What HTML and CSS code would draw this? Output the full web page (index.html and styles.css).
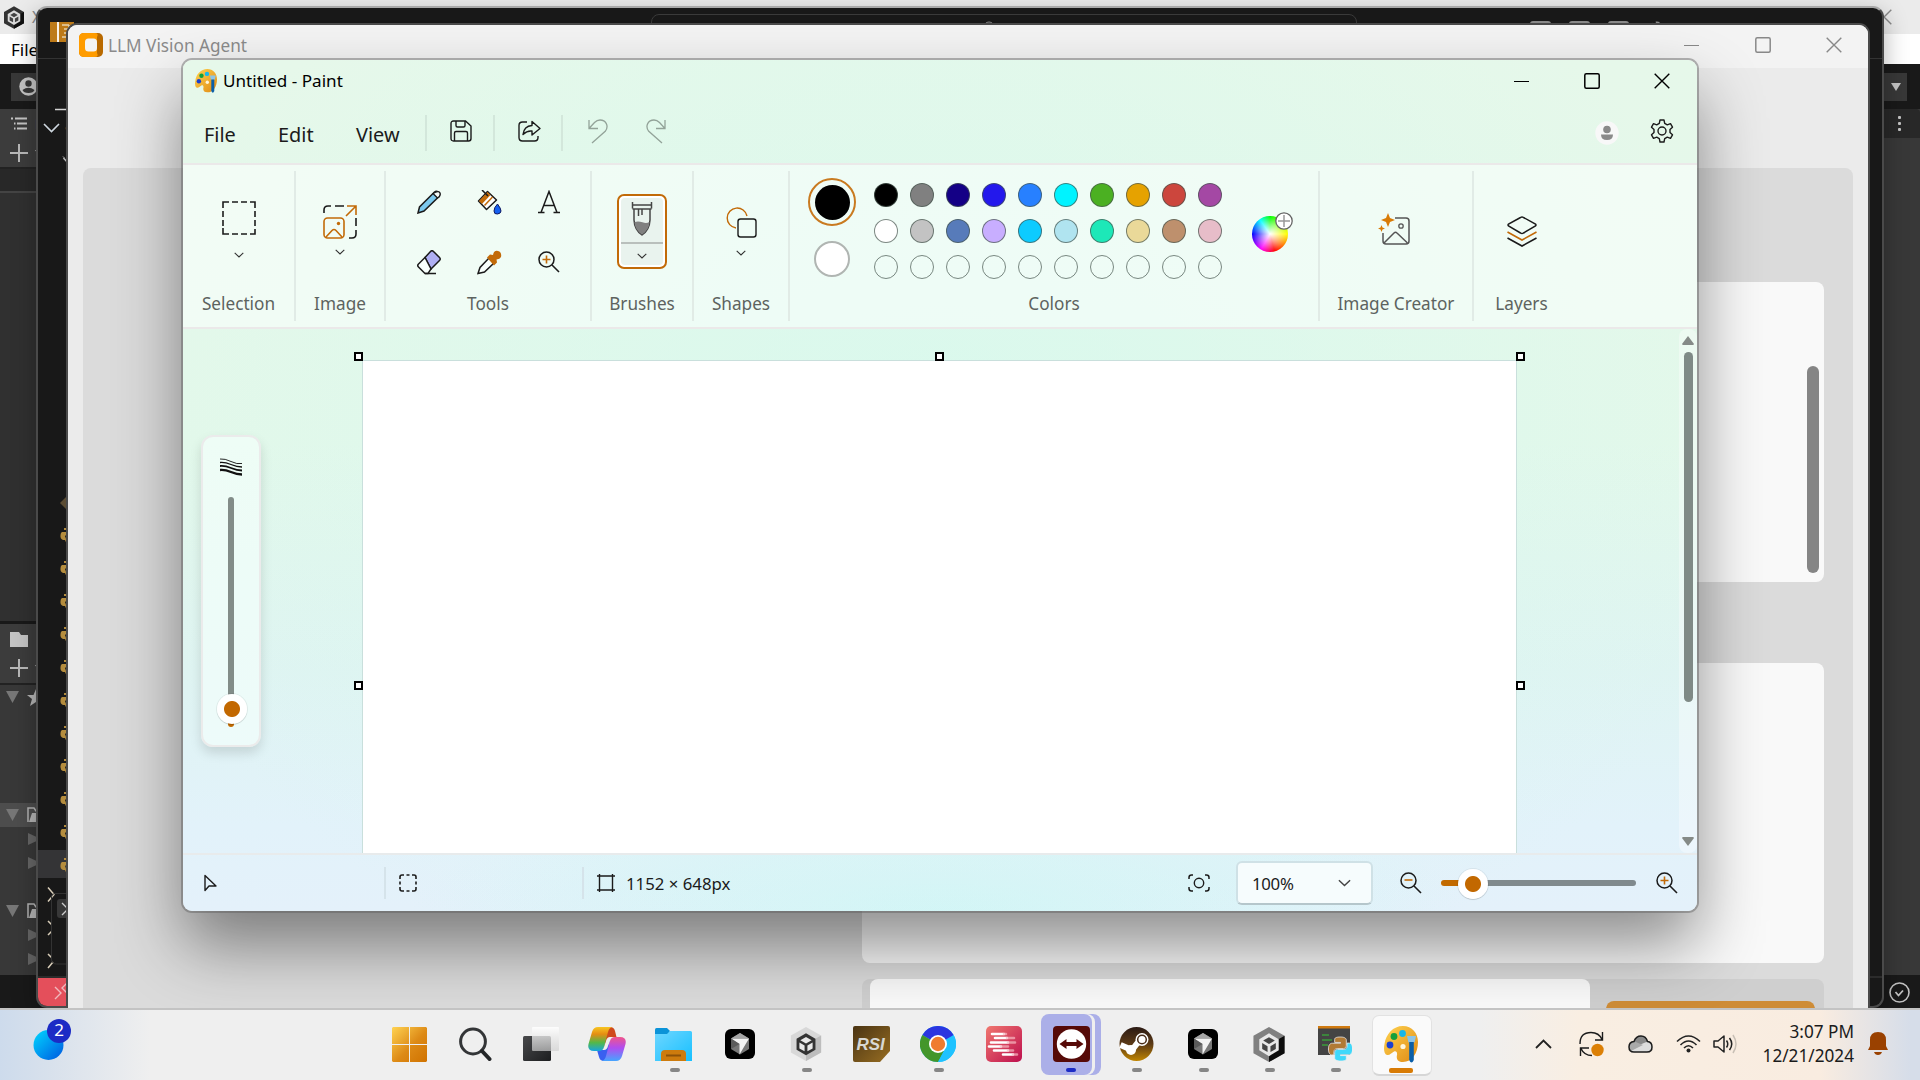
FILE: index.html
```html
<!DOCTYPE html>
<html lang="en">
<head>
<meta charset="utf-8">
<title>Desktop</title>
<link rel="stylesheet" href="styles.css">
</head>
<body>
<svg class="defs" width="0" height="0" aria-hidden="true">
  <defs>
    <linearGradient id="gGold" x1="0" y1="0" x2="1" y2="1"><stop offset="0" stop-color="#ffd34f"/><stop offset="1" stop-color="#e08a14"/></linearGradient>
    <linearGradient id="gStart" gradientUnits="userSpaceOnUse" x1="0" y1="0" x2="35" y2="35"><stop offset="0" stop-color="#ffd352"/><stop offset=".55" stop-color="#dd8a16"/><stop offset="1" stop-color="#d07200"/></linearGradient>
    <linearGradient id="gBlob" x1="0" y1="0" x2="1" y2="1"><stop offset="0" stop-color="#00d8ff"/><stop offset="1" stop-color="#0057e0"/></linearGradient>
    <linearGradient id="gFolder" x1="0" y1="0" x2="1" y2="1"><stop offset="0" stop-color="#6fd6ff"/><stop offset="1" stop-color="#17c0ff"/></linearGradient>
    <linearGradient id="gTask" x1="0" y1="0" x2="1" y2="1"><stop offset="0" stop-color="#f0776f"/><stop offset="1" stop-color="#bd0f4e"/></linearGradient>
    <linearGradient id="gSteam" x1="0" y1="0" x2="0" y2="1"><stop offset="0" stop-color="#2b1a14"/><stop offset=".5" stop-color="#5c3a16"/><stop offset="1" stop-color="#c08500"/></linearGradient>
    <linearGradient id="gRsi" x1="0" y1="0" x2="1" y2="1"><stop offset="0" stop-color="#4a3413"/><stop offset="1" stop-color="#976d22"/></linearGradient>
    <linearGradient id="gCopA" x1="0" y1="0" x2="0" y2="1"><stop offset="0" stop-color="#f7c522"/><stop offset=".3" stop-color="#e58d12"/><stop offset=".65" stop-color="#54b848"/><stop offset="1" stop-color="#16a5e0"/></linearGradient>
    <linearGradient id="gCopB" x1="0" y1="0" x2="0" y2="1"><stop offset="0" stop-color="#f0558a"/><stop offset=".45" stop-color="#b04df0"/><stop offset="1" stop-color="#45a5ff"/></linearGradient>
    <linearGradient id="gDark" x1="0" y1="0" x2="1" y2="1"><stop offset="0" stop-color="#48494b"/><stop offset="1" stop-color="#1c1d1f"/></linearGradient>
    <linearGradient id="gGlass" x1="0" y1="0" x2="0" y2="1"><stop offset="0" stop-color="#ffffff"/><stop offset="1" stop-color="#d0d0d0" stop-opacity=".8"/></linearGradient>
    <symbol id="palette" viewBox="0 0 34 37">
      <path d="M19 0C28 0 34 7 34 16c0 11-6 20-15 20-5 0-7-3-6-7 .5-3-1-4.500-3-3.500-3 1.500-4 4-7 3.500-3-1-3.500-6-2.500-11C2 8 9 0 19 0Z" fill="url(#gGold)"/>
      <circle cx="18.500" cy="7.500" r="3.400" fill="#18b7ea"/><circle cx="10" cy="10.500" r="3.400" fill="#13a03c"/><circle cx="6" cy="19" r="3.400" fill="#1a3fd0"/><circle cx="19" cy="20.500" r="2.600" fill="#fff6dc"/>
      <path d="M23 10h9l-1.500 6.500h-6Z" fill="#8cc4e8"/><path d="M25.200 16h4.600v18q-2.300 5-4.600 0Z" fill="#0b5fa8"/>
    </symbol>
    <symbol id="unity" viewBox="0 0 32 36">
      <path d="M16 0 32 9v18L16 36 0 27V9Z" fill="currentColor"/>
      <path d="M16 18 32 9v18L16 36Z" fill="var(--side)"/>
      <path d="M16 6.500 26 12.500V24l-10 6-10-6V12.500Z" fill="var(--cube)"/>
      <path d="M16 10.500 22 14l-6 3.500L10 14ZM9 16.500l5.500 3.200v6L9 22.700ZM23 16.500l-5.500 3.200v6l5.500-3Z" fill="var(--core)"/>
    </symbol>
    <symbol id="cursorApp" viewBox="0 0 30 30">
      <rect width="30" height="30" rx="6" fill="#000"/><path d="M15 4 24 9.500V20L15 25.500 6 20V9.500Z" fill="#777"/><path d="M6 9.500h18L14.500 25.500V15Z" fill="#f3f3f3"/><path d="M15 4 24 9.500H6Z" fill="#a6a6a6"/><path d="M6 9.500v10.500l8.500-5Z" fill="#5b5b5b"/>
    </symbol>
    <symbol id="chev" viewBox="0 0 10 6"><path d="M.7.800 5 5 9.300.800" fill="none" stroke="currentColor" stroke-width="1.100"/></symbol>
    <symbol id="close" viewBox="0 0 16 16"><path d="m.7.700 14.600 14.600M15.300.700.700 15.300" fill="none" stroke="currentColor" stroke-width="1.400"/></symbol>
    <symbol id="max" viewBox="0 0 16 16"><rect x=".8" y=".8" width="14.400" height="14.400" rx="1.500" fill="none" stroke="currentColor" stroke-width="1.500"/></symbol>
    <symbol id="min" viewBox="0 0 16 16"><path d="M0 8.500h15" stroke="currentColor" stroke-width="1.200"/></symbol>
    <symbol id="snake" viewBox="0 0 16 16"><path d="M4 0h8v2H4ZM2 4h9v3H6.500q-1.500 0-1.500 2v3H3q-3-1-2.500-5Q.7 4.500 2 4Z" fill="#b58d3e"/><path d="M7 8h9v7H8q-3-.5-3-4 0-2 2-3Z" fill="#b58d3e"/></symbol>
    <symbol id="fold" viewBox="0 0 18 16"><path d="M1 15V1h6l2 3h7v2" fill="none" stroke="#b4b4b4" stroke-width="1.500"/><path d="M5 6h13l-3 9H2Z" fill="#b4b4b4"/></symbol>
    <symbol id="lens" viewBox="0 0 22 22"><circle cx="8.500" cy="8.500" r="7.500" fill="none" stroke="#1b1b1b" stroke-width="1.500"/><path d="m14 14 7 7" stroke="#1b1b1b" stroke-width="1.600"/></symbol>
    <path id="pyHalf" d="M14.250.180l.9.200.73.260.59.300.45.320.34.340.25.340.16.330.1.300.04.260.02.200-.01.130V8.500l-.05.630-.13.550-.21.460-.26.380-.3.310-.33.250-.35.190-.35.140-.33.100-.3.070-.26.040-.21.020H8.770l-.69.050-.59.140-.5.220-.41.270-.33.320-.27.350-.2.360-.15.370-.1.350-.07.320-.04.270-.02.210v3.060H3.170l-.21-.03-.28-.07-.32-.12-.35-.18-.36-.26-.36-.36-.35-.46-.32-.59-.28-.73-.21-.88-.14-1.050-.05-1.230.06-1.220.16-1.040.24-.87.32-.71.36-.57.4-.44.42-.33.42-.24.4-.16.36-.1.32-.05.24-.01h.16l.06.010h8.160v-.83H6.180l-.01-2.750-.02-.37.05-.34.11-.31.17-.28.25-.26.31-.23.38-.2.44-.18.51-.15.58-.12.64-.1.71-.06.77-.04.84-.02 1.270.05z"/>
  </defs>
</svg>

<main class="desktop">
  <section class="win unity">
    <div class="u-title"><svg class="u-logo" width="20" height="23"><use href="#unity"/></svg><span>X</span><svg class="u-close" width="16" height="16"><use href="#close"/></svg></div>
    <div class="u-menu">File</div>
    <div class="u-tool">
      <div class="u-btn"><svg width="19" height="19" viewBox="0 0 19 19"><circle cx="9.500" cy="9.500" r="9.200" fill="#c4c4c4"/><circle cx="9.500" cy="6.500" r="3.200" fill="#383838"/><path d="M3.500 13q6-4.500 12 0-1 3-6 3t-6-3Z" fill="#383838"/></svg></div>
      <div class="u-drop"><svg width="10" height="8" viewBox="0 0 10 8"><path d="M0 0h10L5 8Z" fill="#c4c4c4"/></svg></div>
    </div>
    <div class="u-cols">
      <div class="u-left">
        <div class="u-tab"><svg width="16" height="13" viewBox="0 0 16 13"><path d="M0 1.500h2M4 1.500h12M6 6.500h10M3 6.500h1.500M6 11.500h10M3 11.500h1.500" stroke="#c4c4c4" stroke-width="1.800"/></svg><span>H</span></div>
        <div class="u-plus"><svg width="32" height="18" viewBox="0 0 32 18"><path d="M9 0v18M0 9h18" stroke="#b8b8b8" stroke-width="2"/><path d="M25 6h7l-3.500 5Z" fill="#b8b8b8"/></svg></div>
        <div class="u-scene"></div>
        <div class="u-tree"></div>
        <div class="u-tab u-proj"><svg width="18" height="15" viewBox="0 0 18 15"><path d="M0 0h9l2 3h7v12H0Z" fill="#c4c4c4"/></svg><span>P</span></div>
        <div class="u-plus u-plus2"><svg width="32" height="18" viewBox="0 0 32 18"><path d="M9 0v18M0 9h18" stroke="#b8b8b8" stroke-width="2"/><path d="M25 6h7l-3.500 5Z" fill="#b8b8b8"/></svg></div>
        <div class="u-files">
          <div class="u-row"><i class="tri"></i><svg width="18" height="17" viewBox="0 0 18 17"><path d="m9 0 2.500 6H18l-5 4 2 7-6-4-6 4 2-7-5-4h6.500Z" fill="#b4b4b4"/></svg></div>
          <div class="u-gap"></div>
          <div class="u-row on"><i class="tri"></i><svg width="18" height="16"><use href="#fold"/></svg></div>
          <div class="u-row"><i class="tri side"></i></div>
          <div class="u-row"><i class="tri side"></i></div>
          <div class="u-row"></div>
          <div class="u-row"><i class="tri"></i><svg width="18" height="16"><use href="#fold"/></svg></div>
          <div class="u-row"><i class="tri side"></i></div>
          <div class="u-row"><i class="tri side"></i></div>
        </div>
      </div>
      <div class="u-right"><div class="u-dots"><i></i><i></i><i></i></div></div>
    </div>
    <div class="u-status"><svg width="21" height="21" viewBox="0 0 21 21"><circle cx="10.500" cy="10.500" r="9.500" fill="none" stroke="#c4c4c4" stroke-width="1.600"/><path d="m6.500 10 3 3.500 4.500-5" fill="none" stroke="#c4c4c4" stroke-width="1.800"/></svg></div>
  </section>

  <section class="win code">
    <div class="c-title">
      <svg class="c-logo" width="24" height="20" viewBox="0 0 24 20"><rect width="24" height="20" fill="#bd7a18"/><path d="M8 0v20" stroke="#fff" stroke-width="1.800"/><path d="M12 3h7M14 7h5M14 11h5M12 15h7M19 3v14" stroke="#e8d3ae" stroke-width="1.600"/></svg>
      <div class="c-search"><svg width="12" height="12" viewBox="0 0 12 12"><circle cx="6" cy="6" r="5" fill="none" stroke="#8a8a8a"/></svg></div>
      <div class="c-layout"><i></i><i></i><i></i><svg width="20" height="20" viewBox="0 0 20 20"><circle cx="10" cy="10" r="8" fill="none" stroke="#8a8a8a" stroke-width="3" stroke-dasharray="3.500 2.800" stroke-dashoffset="1.500"/></svg></div>
    </div>
    <div class="c-head">
      <svg width="30" height="80" viewBox="0 0 30 80"><path d="M17 51.500h13" stroke="#d4d4d4" stroke-width="1.400"/><path d="m6 66 7.500 7.500L21 66" fill="none" stroke="#cfd8e0" stroke-width="1.600"/><path d="M30 66q-3 4 0 9" fill="none" stroke="#b87a2a" stroke-width="1.500"/></svg>
      <svg width="30" height="20" viewBox="0 0 30 20"><path d="m25 18.500 5 5" stroke="#bbb"/></svg>
      <svg width="30" height="10" viewBox="0 0 30 10"><path d="m25.500 0 5 5.500" stroke="#bbb" stroke-width="1.500"/></svg>
    </div>
    <svg class="c-diamond" width="8" height="16" viewBox="0 0 8 16"><path d="M8 0v16L0 8Z" fill="#5b4c33"/></svg>
    <div class="c-files">
      <div><svg width="16" height="16"><use href="#snake"/></svg></div><div><svg width="16" height="16"><use href="#snake"/></svg></div><div><svg width="16" height="16"><use href="#snake"/></svg></div><div><svg width="16" height="16"><use href="#snake"/></svg></div><div><svg width="16" height="16"><use href="#snake"/></svg></div><div><svg width="16" height="16"><use href="#snake"/></svg></div><div><svg width="16" height="16"><use href="#snake"/></svg></div><div><svg width="16" height="16"><use href="#snake"/></svg></div><div><svg width="16" height="16"><use href="#snake"/></svg></div><div><svg width="16" height="16"><use href="#snake"/></svg></div><div class="sel"><svg width="16" height="16"><use href="#snake"/></svg></div>
    </div>
    <svg class="c-term" width="30" height="99" viewBox="0 0 30 99"><path d="m10 9.500 6 7-6 7M10 43l3.500 3.500M10 57l3.500-3.500M10 76l3.500 3.500M10 90l5-6" fill="none" stroke="#d8cdb8" stroke-width="1.500"/><path d="M30 15.500H17q-3.500 0-3.500 3.500v62q0 5 5 5H30" fill="none" stroke="#333"/><rect x="19" y="21" width="14" height="19" rx="3" fill="#383838"/><path d="m24 25 6 6-6 6" fill="none" stroke="#ccc" stroke-width="1.400"/></svg>
    <div class="c-status"><div class="c-remote"><svg width="20" height="20" viewBox="0 0 20 20"><path d="m4 6 6 6-6 6M17 1l-6 6 6 6" fill="none" stroke="#f0b9bd" stroke-width="1.400"/></svg></div></div>
  </section>

  <section class="win agent">
    <header class="a-title">
      <svg width="24" height="24" viewBox="0 0 24 24"><rect width="24" height="24" rx="5" fill="#b96a00"/><path d="M5 0h11q4 0 2 4v16q2 4-2 4H5q-5 0-5-5V5Q0 0 5 0Z" fill="#ff9c00"/><rect x="6" y="5.500" width="12" height="13" rx="3.500" fill="#f4f4f4"/></svg>
      <span>LLM Vision Agent</span>
      <div class="ctl"><svg width="16" height="16"><use href="#min"/></svg><svg width="16" height="16"><use href="#max"/></svg><svg width="16" height="16"><use href="#close"/></svg></div>
    </header>
    <div class="a-body">
      <div class="a-side"></div>
      <div class="a-main">
        <div class="a-card c1"><div class="a-scroll"></div></div>
        <div class="a-card c2"></div>
        <div class="a-entry"><div class="a-input"></div><div class="a-send"></div></div>
      </div>
    </div>
  </section>

  <section class="win paint">
    <header class="p-title">
      <svg width="22" height="24"><use href="#palette"/></svg>
      <span>Untitled - Paint</span>
      <div class="ctl"><svg width="16" height="16"><use href="#min"/></svg><svg width="16" height="16"><use href="#max"/></svg><svg width="16" height="16"><use href="#close"/></svg></div>
    </header>
    <nav class="p-menu">
      <span class="m1">File</span><span class="m2">Edit</span><span class="m3">View</span>
      <div class="tool"><svg width="22" height="22" viewBox="0 0 22 22"><g fill="none" stroke="#1b1b1b" stroke-width="1.400"><path d="M3.500 1h12L21 6v12.500q0 2.500-2.500 2.500h-15Q1 21 1 18.500v-15Q1 1 3.500 1Z"/><path d="M6 1v4.500q0 1.500 1.500 1.500h6Q15 7 15 5.500V1M4.500 21v-8q0-1.500 1.500-1.500h10q1.500 0 1.500 1.500v8"/></g></svg></div>
      <div class="tool"><svg width="23" height="22" viewBox="0 0 23 22"><g fill="none" stroke="#1b1b1b" stroke-width="1.400" stroke-linejoin="round"><path d="M9 2H4.500Q1 2 1 5.500v12Q1 21 4.500 21h12q3.500 0 3.500-3.500V16"/><path d="M14 1.500 22 8.500l-8 6.500v-4q-5-.5-9 3.500 1-8.500 9-9Z"/></g></svg></div>
      <div class="tool undo"><svg width="20" height="25" viewBox="0 0 20 25"><path d="M1 1v8.500h9M1 9.500 6.500 3.500Q9 1 12 1c6 0 9 6 5.500 11L4 24" fill="none" stroke="#93a399" stroke-width="1.300"/></svg><svg width="20" height="25" viewBox="0 0 20 25"><path d="M19 1v8.500h-9M19 9.500 13.500 3.500Q11 1 8 1C2 1-1 7 2.500 12L16 24" fill="none" stroke="#93a399" stroke-width="1.300"/></svg></div>
      <svg class="avatar" width="24" height="24" viewBox="0 0 24 24"><circle cx="12" cy="12" r="11.700" fill="#f8f8f8"/><circle cx="12" cy="8.500" r="3.800" fill="#8a8a8a"/><path d="M6 13.500h12q0 5.500-6 5.500t-6-5.500Z" fill="#8a8a8a"/></svg>
      <svg class="gear" width="24" height="24" viewBox="0 0 24 24"><g fill="none" stroke="#1b1b1b" stroke-width="1.400" stroke-linejoin="round"><path d="M10 1h4l.7 3.300 2.600 1.500 3.200-1.100 2 3.500L20 10.500v3l2.500 2.300-2 3.500-3.200-1.100-2.600 1.500L14 23h-4l-.7-3.300-2.600-1.500-3.200 1.100-2-3.500L4 13.500v-3L1.500 8.200l2-3.500 3.200 1.100 2.600-1.500Z"/><circle cx="12" cy="12" r="4"/></g></svg>
    </nav>
    <div class="ribbon">
      <div class="grp g-sel"><div class="ico"><svg width="34" height="34" viewBox="0 0 34 34"><path d="M1 7V1h6M10 1h6M19 1h6M28 1h5v6M33 10v6M33 19v6M33 28v5h-5M25 33h-6M16 33h-6M7 33H1v-6M1 25v-6M1 16v-6" fill="none" stroke="#1b1b1b" stroke-width="1.600"/></svg><svg class="dd" width="10" height="6"><use href="#chev"/></svg></div><span>Selection</span></div>
      <div class="grp g-img"><div class="ico"><svg width="34" height="34" viewBox="0 0 34 34"><path d="M1 8V5Q1 1 5 1h3M12 1h9M33 13v8M33 25v4q0 4-4 4h-3" fill="none" stroke="#1b1b1b" stroke-width="1.600"/><g fill="none" stroke="#c26a08" stroke-width="1.600"><path d="M24 1h9v9M33 1 23 11"/><rect x="1" y="13" width="20" height="20" rx="3.500"/><path d="m3 32 6-6.500q2-2 4 0L19 32"/></g><circle cx="15.500" cy="18.500" r="1.700" fill="#c26a08"/></svg><svg class="dd" width="10" height="6"><use href="#chev"/></svg></div><span>Image</span></div>
      <div class="grp g-tools">
        <div class="toolgrid">
          <svg width="24" height="24" viewBox="0 0 24 24"><path d="m1 23 1.500-6L17.500 2q2-1.500 4 .5t.5 4L7 21Z" fill="#7cc9ee" stroke="#1b1b1b" stroke-width="1.500"/><path d="m16 3.500 4.500 4.500Q24 6 23 3T16 3.500Z" fill="#f5fbf8" stroke="#1b1b1b" stroke-width="1.400"/></svg>
          <svg width="25" height="25" viewBox="0 0 25 25"><path d="m1.500 11 9-9.500 9 8.500-10 9.500Z" fill="#fff" stroke="#1b1b1b" stroke-width="1.500" stroke-linejoin="round"/><path d="M2 11 10.500 2l3 3-8.500 9Z" fill="#c26a08"/><path d="m7.500 15.500 8-8.500" stroke="#c26a08" stroke-width="1.500"/><path d="M5 0l6 6" stroke="#1b1b1b" stroke-width="1.500"/><path d="M20.500 14q3.500 4.500 3.500 7t-3.500 3-3.500-3 3.500-7Z" fill="#1660f0" stroke="#101a60"/></svg>
          <svg width="22" height="24" viewBox="0 0 22 24"><path d="M0 22.500h6.500M15.500 22.500H22M3 22.500 11 1.500l8 21M6 15.500h10" fill="none" stroke="#1b1b1b" stroke-width="1.500"/></svg>
          <svg width="24" height="25" viewBox="0 0 24 25"><path d="m8 7.500 5.500-6q1.500-1.500 3 0l6 6q1.500 1.500 0 3L14 19Z" fill="#afaff3" stroke="#1b1b1b" stroke-width="1.500"/><path d="M8 7.500 1.500 14q-1.500 1.500 0 3L8 23.500h3L14 19Z" fill="#f8fffc" stroke="#1b1b1b" stroke-width="1.500"/><path d="M8 23.500h11" stroke="#1b1b1b" stroke-width="1.500"/></svg>
          <svg width="25" height="25" viewBox="0 0 25 25"><path d="m1 23.500 2-6L12 8l5 5-9.500 9Z" fill="#f8fffc" stroke="#1b1b1b" stroke-width="1.500"/><path d="M10 7.500 13 4.500l3 .5Q17 0 21 1t3 6q-1 2-4.500 2.500l.5 3-3 3Z" fill="#c26a08"/></svg>
          <svg width="22" height="22" viewBox="0 0 22 22"><use href="#lens"/><path d="M8.500 4.500v8M4.500 8.500h8" stroke="#c26a08" stroke-width="1.600"/></svg>
        </div><span>Tools</span></div>
      <div class="grp g-brush"><div class="brushbtn"><div class="inner"><svg width="22" height="34" viewBox="0 0 22 34"><path d="M1.500 0v6.500M20.500 0v6.500M1.500 3h19M1.500 7h19" stroke="#444" stroke-width="1.500"/><path d="M3 7v11q.5 10 8 15 7.500-5 8-15V7" fill="none" stroke="#444" stroke-width="1.500"/><path d="M3.500 20q4-1 8 .3t7-.3q-.5 8-7.500 12.500Q4 28 3.500 20Z" fill="#808080"/><path d="M7.500 7v7M11 7v6" stroke="#444" stroke-width="1.500"/></svg></div><div class="inner low"><svg width="10" height="6"><use href="#chev"/></svg></div></div><span>Brushes</span></div>
      <div class="grp g-shapes"><div class="ico"><svg width="31" height="31" viewBox="0 0 31 31"><path d="M10 21A10 10 0 1 1 21 9" fill="none" stroke="#c26a08" stroke-width="1.400"/><rect x="12" y="12" width="18" height="18" rx="2.500" fill="none" stroke="#1b1b1b" stroke-width="1.400"/></svg><svg class="dd" width="10" height="6"><use href="#chev"/></svg></div><span>Shapes</span></div>
      <div class="grp g-colors"><div class="palette">
        <div class="current"><div class="ring"><i></i></div><i class="second"></i></div>
        <div class="swatches">
          <i style="--c:#000"></i><i style="--c:#808080"></i><i style="--c:#140086"></i><i style="--c:#2318ec"></i><i style="--c:#2780ff"></i><i style="--c:#00f3ff"></i><i style="--c:#4bb022"></i><i style="--c:#e6a200"></i><i style="--c:#cc463d"></i><i style="--c:#a448a4"></i>
          <i style="--c:#fff"></i><i style="--c:#c3c3c3"></i><i style="--c:#577bba"></i><i style="--c:#c8aeff"></i><i style="--c:#0dcbff"></i><i style="--c:#b0e4f0"></i><i style="--c:#1de8b8"></i><i style="--c:#ead999"></i><i style="--c:#be906d"></i><i style="--c:#e7bdc9"></i>
          <i></i><i></i><i></i><i></i><i></i><i></i><i></i><i></i><i></i><i></i>
        </div>
        <div class="wheel"><svg width="18" height="18" viewBox="0 0 18 18"><circle cx="9" cy="9" r="8.200" fill="#fff" stroke="#666" stroke-width="1.300"/><path d="M9 3v12M3 9h12" stroke="#999" stroke-width="1.500"/></svg></div>
      </div><span>Colors</span></div>
      <div class="grp g-create"><div class="ico"><svg width="32" height="32" viewBox="0 0 32 32"><path d="M17 5h11q3 0 3 3v20q0 3-3 3H8q-3 0-3-3v-8" fill="none" stroke="#555" stroke-width="1.500"/><path d="m6 30 10-10q1.500-1.500 3 0l10.500 10" fill="none" stroke="#555" stroke-width="1.500"/><circle cx="23" cy="13" r="2.200" fill="none" stroke="#555" stroke-width="1.300"/><path d="m10 0 2 5 5 2-5 2-2 5-2-5-5-2 5-2ZM3.500 12l1 2.500 2.500 1-2.500 1-1 2.500-1-2.500-2.500-1 2.500-1Z" fill="#d97b06"/></svg></div><span>Image Creator</span></div>
      <div class="grp g-layers"><div class="ico"><svg width="30" height="31" viewBox="0 0 30 31"><path d="M13.500 1.500q1.500-1 3 0l12 6.500q1 1 0 2l-12 7q-1.500 1-3 0l-12-7q-1-1 0-2Z" fill="none" stroke="#1b1b1b" stroke-width="1.500"/><path d="m.5 16 14.500 8 14.500-8" fill="none" stroke="#c26a08" stroke-width="1.600"/><path d="m.5 22 14.500 8 14.500-8" fill="none" stroke="#1b1b1b" stroke-width="1.600"/></svg></div><span>Layers</span></div>
    </div>
    <div class="work">
      <div class="sheet"></div>
      <i class="h h1"></i><i class="h h2"></i><i class="h h3"></i><i class="h h4"></i><i class="h h5"></i>
      <div class="size">
        <svg width="23" height="18" viewBox="0 0 23 18"><g fill="none" stroke="#111"><path d="M0 1q5-.5 11 2.500T22 5.500" stroke-width=".9"/><path d="M0 4.500q5-.5 11 2T22 9" stroke-width="1.300"/><path d="M0 8q5-.5 11 2t11 2.500" stroke-width="1.800"/><path d="M0 12q5-.5 11 2t11 2.500" stroke-width="2.400"/></g></svg>
        <div class="vtrack"><i class="thumb"></i></div>
      </div>
      <div class="vscroll"><svg width="12" height="9" viewBox="0 0 12 9"><path d="M6 0 12 8q-.5 1-1 1H1Q.5 9 0 8Z" fill="#858a87"/></svg><i></i><svg width="12" height="9" viewBox="0 0 12 9"><path d="M6 9 12 1q-.5-1-1-1H1Q.5 0 0 1Z" fill="#858a87"/></svg></div>
    </div>
    <footer class="status">
      <div class="s1"><svg width="13" height="18" viewBox="0 0 13 18"><path d="M1 1.500v15l4-4.500h7Z" fill="none" stroke="#1b1b1b" stroke-width="1.400" stroke-linejoin="round"/></svg></div>
      <div class="s2"><svg width="18" height="18" viewBox="0 0 18 18"><path d="M1 5V3q0-2 2-2h2M7.500 1h3M13 1h2q2 0 2 2v2M17 7.500v3M17 13v2q0 2-2 2h-2M10.500 17h-3M5 17H3q-2 0-2-2v-2M1 10.500v-3" fill="none" stroke="#1b1b1b" stroke-width="1.600"/></svg></div>
      <div class="s3"><svg width="18" height="18" viewBox="0 0 18 18"><path d="M2.500 0v18M15.500 0v18M0 2h18M0 16h18" stroke="#1b1b1b" stroke-width="1.400"/></svg><span>1152 × 648px</span></div>
      <div class="s4">
        <svg class="fit" width="22" height="18" viewBox="0 0 22 18"><path d="M5 1H3.500Q1 1 1 3.500V5M17 1h1.500Q21 1 21 3.500V5M5 17H3.500Q1 17 1 14.500V13M17 17h1.500q2.500 0 2.500-2.500V13" fill="none" stroke="#1b1b1b" stroke-width="1.500"/><circle cx="11" cy="9" r="4.700" fill="none" stroke="#1b1b1b" stroke-width="1.400"/></svg>
        <div class="zoombox"><span>100%</span><svg width="13" height="8"><use href="#chev"/></svg></div>
        <svg class="zo" width="22" height="22" viewBox="0 0 22 22"><use href="#lens"/><path d="M4.500 8h8" stroke="#c26a08" stroke-width="1.600"/></svg>
        <div class="htrack"><i class="thumb"></i></div>
        <svg class="zi" width="22" height="22" viewBox="0 0 22 22"><use href="#lens"/><path d="M8.500 4.500v8M4.500 8.500h8" stroke="#c26a08" stroke-width="1.600"/></svg>
      </div>
    </footer>
  </section>
</main>

<footer class="taskbar">
  <div class="widgets"><svg width="38" height="42" viewBox="0 0 38 42"><circle cx="15.500" cy="26" r="15" fill="url(#gBlob)"/><circle cx="26" cy="12" r="12" fill="#1c2bc5"/></svg><b>2</b></div>
  <div class="apps">
    <div class="app"><svg width="35" height="35" viewBox="0 0 35 35"><path d="M1 0h16v17H0V1ZM18 0h16l1 1v16H18ZM0 18h17v17H1l-1-1ZM18 18h17v16l-1 1H18Z" fill="url(#gStart)"/></svg></div>
    <div class="app"><svg width="33" height="34" viewBox="0 0 33 34"><circle cx="14" cy="14.500" r="12.400" fill="none" stroke="#333537" stroke-width="3"/><path d="m23 24 7.500 8" stroke="#242628" stroke-width="4" stroke-linecap="round"/></svg></div>
    <div class="app"><svg width="36" height="34" viewBox="0 0 36 34"><rect y="9" width="28" height="25" rx="1.500" fill="url(#gDark)"/><rect x="9" width="27" height="24" rx="1" fill="url(#gGlass)" fill-opacity=".85"/></svg></div>
    <div class="app"><svg width="38" height="34" viewBox="0 0 38 34"><path d="M22 0q4 0 5 4l1.500 6H22q-3 0-4 4l-2 6L19 0Z" fill="#cf4a1c"/><path d="M16 34q-4 0-5-4l-2-7h7q3 0 4-4l2-5-3 20Z" fill="#3960f0"/><path d="M10 0h14q-3 1-4 5l-4 15q-1 4-5 4H6q-7 0-5.500-7L4 5Q5.500 0 10 0Z" fill="url(#gCopA)"/><path d="M28 34H14q3-1 4-5l4-15q1-4 5-4h5q7 0 5.500 7L34 29q-1.500 5-6 5Z" fill="url(#gCopB)"/></svg></div>
    <div class="app run"><svg width="37" height="33" viewBox="0 0 37 33"><path d="M1.500 0H12l3 3-3 5H0V1.500Q0 0 1.500 0Z" fill="#0b93d8"/><path d="M0 6h12l3-3h20.500Q37 3 37 4.500V33H0Z" fill="url(#gFolder)"/><path d="M6 33V26q0-4 4-4h17q4 0 4 4v7Z" fill="#cd7b0d"/><path d="M11 27.500h15" stroke="#8d5208" stroke-width="2"/></svg></div>
    <div class="app"><svg width="30" height="30"><use href="#cursorApp"/></svg></div>
    <div class="app run"><svg class="light" width="32" height="34"><use href="#unity"/></svg></div>
    <div class="app"><svg width="37" height="36" viewBox="0 0 37 36"><path d="M2 0h33q2 0 2 2v23L27 36H2q-2 0-2-2V2Q0 0 2 0Z" fill="url(#gRsi)"/><text x="3.500" y="24" class="rsi">RSI</text></svg></div>
    <div class="app run"><svg width="36" height="36" viewBox="0 0 36 36"><circle cx="18" cy="18" r="18" fill="#1fc2ff"/><path d="M18 18 2.400 9A18 18 0 0 1 33.600 9Z" fill="#2b35e0"/><path d="M2.400 9A18 18 0 0 0 18 36l7.800-13.500L18 18Z" fill="#43962a"/><path d="M18 9h15.600L25 22.500 18 36A18 18 0 0 0 33.600 9Z" fill="#1fc2ff"/><circle cx="18" cy="18" r="9" fill="#fff"/><circle cx="18" cy="18" r="7.200" fill="#f07c2e"/></svg></div>
    <div class="app"><svg width="36" height="36" viewBox="0 0 36 36"><rect width="36" height="36" rx="5" fill="url(#gTask)"/><path d="M6 8h12M9 12h12M5 16.500h17M3 20.500h12M8 24.500h14M17 28.500h10" stroke="#fff" stroke-width="2.600" stroke-linecap="round"/><path d="M18 8h2M21 12h7M22 16.500h7M15 20.500h7M22 24.500h5M27 28.500h4" stroke="#f7b9c2" stroke-width="2.600" stroke-linecap="round" opacity=".7"/></svg></div>
    <div class="app run tv"><svg width="37" height="36" viewBox="0 0 37 36"><rect width="37" height="36" rx="4" fill="#560a08"/><circle cx="18.500" cy="18" r="14.700" fill="#fff"/><path d="m6.500 18 7-5v3h10v-3l7 5-7 5v-3h-10v3Z" fill="#560a08"/></svg></div>
    <div class="app run"><svg width="35" height="34" viewBox="0 0 35 34"><circle cx="17.500" cy="17" r="17" fill="url(#gSteam)"/><path d="M1.500 18 13 23 20 14" fill="none" stroke="#fff" stroke-width="6"/><circle cx="12" cy="23" r="5" fill="#fff"/><circle cx="23" cy="12.500" r="6.500" fill="#fff"/><circle cx="23" cy="12.500" r="4.300" fill="none" stroke="#4a2e1a" stroke-width="1.500"/></svg></div>
    <div class="app run"><svg width="30" height="30"><use href="#cursorApp"/></svg></div>
    <div class="app run"><svg class="dark" width="32" height="35"><use href="#unity"/></svg></div>
    <div class="app run"><svg width="34" height="36" viewBox="0 0 34 36"><rect width="32" height="29" fill="#444"/><path d="M0 0h32v2.500H0Z" fill="#d07a10"/><path d="M4 9h7M4 14h10M4 19h6" stroke="#3a9a3a" stroke-width="1.400"/><g transform="translate(10.500 11)" stroke="#eee" stroke-width=".8"><use href="#pyHalf" fill="#b17a35"/><use href="#pyHalf" transform="rotate(180 12 12)" fill="#3fd8fa"/></g></svg></div>
    <div class="app run active"><svg width="34" height="37"><use href="#palette"/></svg></div>
  </div>
  <div class="tray">
    <svg class="t1" width="17" height="10" viewBox="0 0 17 10"><path d="m1 9 7.500-7.500L16 9" fill="none" stroke="#222" stroke-width="1.800"/></svg>
    <svg class="t2" width="25" height="26" viewBox="0 0 25 26"><path d="M1 13Q1 1.500 12 1.500q8 0 11 7M23.500 1v8H16M13 24.500q-8 0-11-7M1.500 25v-8H10" fill="none" stroke="#1b1b1b" stroke-width="1.400"/><circle cx="18.500" cy="19" r="6.200" fill="#dc7f05"/></svg>
    <svg class="t3" width="25" height="18" viewBox="0 0 25 18"><path d="M6 17Q1 17 1 12t5-5.500Q8 1 13 1t6.500 5.500Q24 7 24 12t-5 5Z" fill="#dcdcdc"/><path d="M6 6.500Q8 1 13 1t6.500 5.500L9 11Z" fill="#8a8a8a"/><path d="M1.500 14q-1-7 5-7.500L15 10 3 16Z" fill="#a9a9a9"/><path d="M6 17Q1 17 1 12t5-5.500Q8 1 13 1t6.500 5.500Q24 7 24 12t-5 5Z" fill="none" stroke="#1b1b1b" stroke-width="1.500"/></svg>
    <svg class="t4" width="25" height="18" viewBox="0 0 25 18"><g fill="none" stroke="#222" stroke-width="1.600"><path d="M1 6.500q11.500-11 23 0M4.500 10q8-8 16 0M8 13q4.500-4.500 9 0"/></g><circle cx="12.500" cy="15.500" r="2" fill="#222"/></svg>
    <svg class="t5" width="25" height="20" viewBox="0 0 25 20"><path d="M1 7v6h4l6 5V2L5 7Z" fill="none" stroke="#222" stroke-width="1.500" stroke-linejoin="round"/><path d="M13.500 6.500q2.500 3.500 0 7M16.500 4q4.500 6 0 12" fill="none" stroke="#222" stroke-width="1.500"/><path d="M20 1q6 9 0 18" fill="none" stroke="#c9c0b6" stroke-width="1.500"/></svg>
    <div class="clock"><span>3:07 PM</span><span>12/21/2024</span></div>
    <svg class="t6" width="20" height="24" viewBox="0 0 20 24"><path d="M10 0q8 0 8 8v6l2 4H0l2-4V8q0-8 8-8ZM6 20h8q-1 3-4 3t-4-3Z" fill="#9a4100"/></svg>
  </div>
</footer>
</body>
</html>
```
FILE: styles.css
```css
* { box-sizing: border-box; }
body { margin: 0; width: 1920px; height: 1080px; overflow: hidden; font-family: "Noto Sans", "Open Sans", sans-serif; color: #1b1b1b; display: flex; flex-direction: column; }
svg { display: block; flex: none; }
.defs { position: absolute; }
.desktop { position: relative; height: 1008px; overflow: hidden; }
.win { position: absolute; overflow: hidden; }

/* Unity editor */
.unity { left: 0; top: 0; width: 1920px; height: 1008px; background: #303030; display: flex; flex-direction: column; color: #c4c4c4; }
.u-title { height: 34px; background: #ebebeb; display: flex; align-items: center; padding: 0 29px 0 4px; color: #888; gap: 8px; font-size: 16px; }
.u-logo { color: #333; --side: #111; --cube: #ddd; --core: #444; }
.u-close { margin-left: auto; margin-right: -1px; }
.u-menu { height: 30px; background: #fff; color: #000; font-size: 17px; line-height: 31px; padding-left: 11px; }
.u-tool { height: 45px; background: #191919; display: flex; justify-content: space-between; align-items: center; padding: 0 13px 0 11px; }
.u-btn, .u-drop { width: 40px; height: 28px; background: #383838; display: flex; align-items: center; padding-left: 8px; }
.u-drop { padding: 0 6px 0 0; justify-content: flex-end; }
.u-cols { height: 866px; display: flex; justify-content: space-between; }
.u-left { width: 300px; display: flex; flex-direction: column; background: #303030; }
.u-tab { height: 28px; background: #3c3c3c; display: flex; align-items: center; padding-left: 11px; gap: 8px; font-size: 15px; }
.u-plus { height: 32px; background: #3c3c3c; border-bottom: 2px solid #222; padding: 7px 0 0 10px; }
.u-scene { height: 24px; background: #282828; border-bottom: 2px solid #444; }
.u-tree { height: 431px; border-bottom: 3px solid #191919; }
.u-proj { height: 30px; padding-left: 10px; }
.u-plus2 { height: 31px; padding-top: 5px; }
.u-files { background: #383838; flex: 1; }
.u-row { height: 24px; display: flex; align-items: center; padding-left: 6px; gap: 8px; }
.u-row.on { background: #4d4d4d; }
.u-gap { height: 94px; }
.tri { width: 13px; height: 12px; background: #777; clip-path: polygon(0 0, 100% 0, 50% 100%); }
.tri.side { margin-left: 22px; background: #666; clip-path: polygon(0 0, 100% 50%, 0 100%); }
.u-right { width: 200px; background: #383838; }
.u-dots { height: 29px; background: #282828; border-radius: 0 4px 0 0; display: flex; flex-direction: column; gap: 3px; align-items: flex-end; padding: 7px 19px 0 0; }
.u-dots i { width: 3px; height: 3px; background: #c4c4c4; border-radius: 1px; }
.u-status { flex: 1; background: #191919; display: flex; justify-content: flex-end; align-items: center; padding: 2px 10.500px 0 0; }

/* code editor */
.code { left: 36px; top: 6px; width: 1848px; height: 1002px; background: #181818; border: 2px solid #4a4a4a; border-top-color: #a8a8a8; border-radius: 11px; box-shadow: 0 8px 24px rgba(0,0,0,.3); }
.c-title { height: 51px; border-bottom: 1px solid #333; display: flex; padding: 0 0 0 12px; }
.c-logo { margin-top: 14px; }
.c-search { margin-left: 577px; margin-top: 6px; width: 706px; height: 36px; border: 1px solid #3a3a3a; border-radius: 8px; padding: 6px 0 0 331px; }
.c-layout { display: flex; margin: 13px 0 0 173px; gap: 18px; }
.c-layout i { width: 21px; height: 18px; border: 2px solid #8a8a8a; border-radius: 3px; }
.c-head { height: 436px; margin-top: -1px; }
.c-diamond { margin: 1px 0 9px 22px; }
.c-files div { width: 300px; height: 33px; padding: 8px 0 0 22px; }
.c-files .sel { height: 28px; background: #343436; }
.c-status { border-top: 2px solid #2b2b2b; height: 31px; margin-top: -1px; }
.c-remote { width: 60px; height: 29px; background: #e44f5b; padding: 3px 0 0 13px; }

/* agent window */
.agent { left: 66px; top: 23px; width: 1804px; height: 1000px; border: 2px solid #4a4a4a; border-radius: 11px 11px 0 0; background: #ebebeb; }
.a-title { height: 43px; background: #f3f3f3; display: flex; align-items: center; padding: 0 26px 3px 11px; gap: 5px; color: #8b8b8b; font-size: 17.200px; }
.a-title .ctl { gap: 55px; color: #888; }
.ctl { margin-left: auto; display: flex; }
.a-body { margin: 100px 15px 0 15px; height: 900px; background: #dbdbdb; border-radius: 8px; display: grid; grid-template-columns: 779px 962px; padding-top: 114px; }
.a-card { background: #f9f9f9; border-radius: 8px; height: 300px; }
.c1 { padding: 84px 5px 0 0; display: flex; justify-content: flex-end; }
.a-scroll { width: 12px; height: 207px; border-radius: 6px; background: #858585; }
.c2 { margin-top: 81px; }
.a-entry { margin-top: 16px; height: 60px; border-radius: 8px; background: #cfcfcf; display: flex; padding: 0 9px 0 8px; justify-content: space-between; }
.a-input { width: 720px; background: #f9f9f9; border-radius: 8px; }
.a-send { margin-top: 22px; width: 209px; background: #ce8c37; border-radius: 8px; }

/* paint */
.paint { left: 183px; top: 60px; width: 1514px; height: 851px; border-radius: 9px; display: flex; flex-direction: column;
  background: radial-gradient(ellipse 55% 70% at 50% 45%, rgba(214,249,238,.75), rgba(214,249,238,0)), radial-gradient(ellipse 35% 14% at 50% 100%, rgba(208,245,247,.9), rgba(208,245,247,0)), linear-gradient(#e6f8ea 0, #e3f8ea 45%, #dff4f2 72%, #e2f2fa 90%, #e4f1fa 100%);
  box-shadow: 0 0 0 2px rgba(95,95,95,.45), 0 34px 66px rgba(0,0,0,.44); }
.p-title { height: 43px; display: flex; align-items: center; padding: 0 27px 2px 12px; gap: 6px; font-size: 17.100px; color: #000; }
.p-title .ctl { gap: 54px; }
.p-menu { height: 60px; display: flex; padding-top: 12px; font-size: 19.900px; }
.p-menu span { line-height: 39px; }
.m1 { width: 74px; margin-left: 21px; }
.m2 { width: 78px; }
.m3 { width: 69px; }
.tool { border-left: 2px solid #d3e7db; height: 36px; width: 68px; padding: 5px 0 0 22.500px; }
.undo { width: 130px; display: flex; gap: 38px; padding: 4px 0 0 25px; }
.avatar { margin: 6px 0 0 auto; }
.gear { margin: 4px 23px 0 31px; }
.ribbon { height: 166px; border-top: 2px solid #ebe9e9; border-bottom: 2px solid #ebe9e9; background: rgba(255,255,255,.5); display: flex; padding: 6px 0; }
.grp { border-right: 2px solid #e1ebe6; display: flex; flex-direction: column; align-items: center; justify-content: space-between; font-size: 17.200px; color: #5d635f; white-space: nowrap; }
.grp > span { line-height: 20px; margin-bottom: 7px; }
.ico { display: flex; flex-direction: column; align-items: center; color: #333; }
.g-sel { width: 113px; } .g-img { width: 90px; } .g-tools { width: 206px; } .g-brush { width: 102px; } .g-shapes { width: 96px; } .g-colors { width: 530px; } .g-create { width: 154px; } .g-layers { width: 95px; border: 0; }
.g-sel .ico { padding-top: 30px; gap: 17px; }
.g-img .ico { padding-top: 34px; gap: 10px; }
.g-shapes .ico { padding-top: 36px; gap: 12px; }
.g-create .ico { padding-top: 42px; margin-left: -5px; }
.g-layers .ico { padding-top: 45px; }
.toolgrid { display: grid; grid-template-columns: repeat(3, 60px); grid-template-rows: repeat(2, 60px); justify-items: center; align-items: center; margin: 1px 0 0 2px; }
.brushbtn { margin-top: 23px; width: 50px; height: 75px; border: 2px solid #c26a08; border-radius: 7px; padding: 2px; background: #fff; color: #333; }
.inner { height: 44px; background: #e9f3ee; border-radius: 4px 4px 0 0; display: flex; justify-content: center; padding-top: 4px; }
.low { height: 23px; border-top: 2px solid #b9bfbc; border-radius: 0 0 4px 4px; align-items: center; padding: 2px 0 0; }
.palette { width: 100%; display: flex; padding-left: 18px; }
.current { padding-top: 7px; width: 48px; display: flex; flex-direction: column; align-items: center; gap: 15px; }
.ring { width: 48px; height: 48px; border: 2px solid #c97a20; border-radius: 50%; padding: 4.500px; }
.ring i { display: block; width: 35px; height: 35px; border-radius: 50%; background: #000; }
.second { width: 36px; height: 36px; border-radius: 50%; background: #fff; border: 2px solid #b0b5b2; }
.swatches { margin: 12px 0 0 18px; display: grid; grid-template-columns: repeat(10, 24px); grid-auto-rows: 24px; gap: 12px; }
.swatches i { border-radius: 50%; border: 1.300px solid rgba(70,85,78,.7); background: var(--c, transparent); }
.wheel { margin: 45px 0 0 30px; width: 36px; height: 36px; border-radius: 50%; position: relative; background: radial-gradient(#fff 0, rgba(255,255,255,0) 70%), conic-gradient(#0f0, #ff0 90deg, #f00 165deg, #f0f 210deg, #00f 270deg, #0ff 325deg, #0f0); }
.wheel svg { position: absolute; right: -4.500px; top: -4.500px; }
.work { height: 524px; position: relative; overflow: hidden; }
.sheet { position: absolute; left: 179px; top: 31px; width: 1155px; height: 650px; background: #fff; border: 1px solid #c9dfdc; }
.h { position: absolute; width: 9px; height: 9px; background: #fff; border: 2px solid #000; }
.h1 { left: 171px; top: 23px; } .h2 { left: 752px; top: 23px; } .h3 { left: 1333px; top: 23px; } .h4 { left: 171px; top: 352px; } .h5 { left: 1333px; top: 352px; }
.size { position: absolute; left: 18px; top: 106px; width: 60px; height: 312px; border: 2px solid #ebebeb; border-radius: 12px; background: rgba(245,255,252,.65); box-shadow: 0 6px 12px rgba(0,0,0,.13); padding: 21px 0 0 17px; }
.vtrack { margin: 21px 0 0 8px; width: 6px; height: 230px; border-radius: 3px; position: relative; background: linear-gradient(#828c88 0 212px, #c26a00 212px); }
.thumb { position: absolute; width: 30px; height: 30px; border-radius: 50%; background: radial-gradient(circle, #c26800 0 7.500px, #fff 8.500px); box-shadow: 0 0 0 1px rgba(0,0,0,.06), 0 1px 1px rgba(0,0,0,.12); }
.vtrack .thumb { left: -11.500px; top: 197px; }
.vscroll { position: absolute; right: 0; top: 0; width: 18px; height: 524px; border-radius: 8px; background: rgba(255,255,255,.35); display: flex; flex-direction: column; align-items: center; padding: 7px 0; }
.vscroll i { width: 9px; height: 350px; margin: 7px 0 auto; border-radius: 5px; background: #7f8a86; }
.status { height: 58px; border-top: 2px solid #e8ebec; display: flex; align-items: center; font-size: 16.800px; }
.status > div { height: 32px; display: flex; align-items: center; }
.s1 { width: 201px; padding-left: 21px; }
.s2 { width: 198px; padding-left: 13px; border-left: 2px solid #d5e3ea; }
.s3 { padding-left: 13px; gap: 11px; border-left: 2px solid #d5e3ea; }
.s4 { margin-left: auto; }
.zoombox { margin-left: 26px; width: 137px; height: 44px; border: 2px solid #cfe1e6; border-bottom-color: #b5c6cb; border-radius: 6px; background: #f6fcfd; display: flex; align-items: center; justify-content: space-between; padding: 0 20px 0 14px; font-size: 16.800px; letter-spacing: -.3px; color: #1b1b1b; }
.zoombox svg { color: #444; }
.zo { margin-left: 27px; }
.htrack { margin: 0 20px 0 19px; width: 195px; height: 6px; border-radius: 3px; position: relative; background: linear-gradient(90deg, #c26a00 0 30px, #808a8d 30px); }
.htrack .thumb { left: 17px; top: -11.500px; }
.zi { margin-right: 19px; }

/* taskbar */
.taskbar { height: 72px; border-top: 2px solid #c3c3c3; display: flex; position: relative; background: linear-gradient(90deg, #cddbec 0, #d8e1ec 50px, #efefef 150px, #efefef 1480px, #f9eee2 1580px, #f9ece0 1820px, #d6dde9 1910px); }
.widgets { position: relative; width: 376px; padding: 9px 0 0 33px; }
.widgets b { position: absolute; left: 47px; top: 8px; width: 24px; line-height: 24px; text-align: center; color: #fff; font-weight: 400; font-size: 17px; }
.apps { width: 1058px; display: grid; grid-template-columns: repeat(16, 1fr); height: 70px; }
.app { display: flex; justify-content: center; align-items: center; padding-bottom: 2px; position: relative; }
.app svg { position: relative; }
.app.run::after { content: ""; position: absolute; left: 29px; top: 58px; width: 10px; height: 4px; border-radius: 2px; background: #868686; }
.light { color: #d8d8d8; --side: #bdbdbd; --cube: #333; --core: #e8e8e8; }
.dark { color: #808080; --side: #0d0d0d; --cube: #e8e8e8; --core: #444; }
.rsi { font: italic 700 17px "Liberation Sans", sans-serif; fill: #d8d8d4; }
.tv::before { content: ""; position: absolute; left: 4px; top: 4px; width: 51px; height: 61px; border-radius: 8px; background: #abafe8; box-shadow: 3px 0 0 #efefef, 9px 0 0 #abafe8; }
.tv svg { left: 1px; }
.app.tv::after { background: #1c2bc5; }
.active::before { content: ""; position: absolute; left: 4px; top: 5px; width: 58px; height: 58px; border-radius: 7px; background: #fafafa; border: 1px solid #e2e2e2; border-bottom: 2px solid #d6d6d6; }
.app.active::after { left: 21px; width: 24px; height: 5px; background: #d87b05; }
.tray { flex: 1; display: flex; align-items: center; padding: 0 32px 0 0; justify-content: flex-end; }
.tray svg { margin-top: -3px; }
.t2 { margin: 0 24px 0 27px; }
.t3 { margin-right: 23px; }
.t4 { margin-right: 12px; }
.clock { display: flex; flex-direction: column; align-items: flex-end; width: 116px; font-size: 17.200px; line-height: 24px; margin: -3px 14px 0 0; }
```
